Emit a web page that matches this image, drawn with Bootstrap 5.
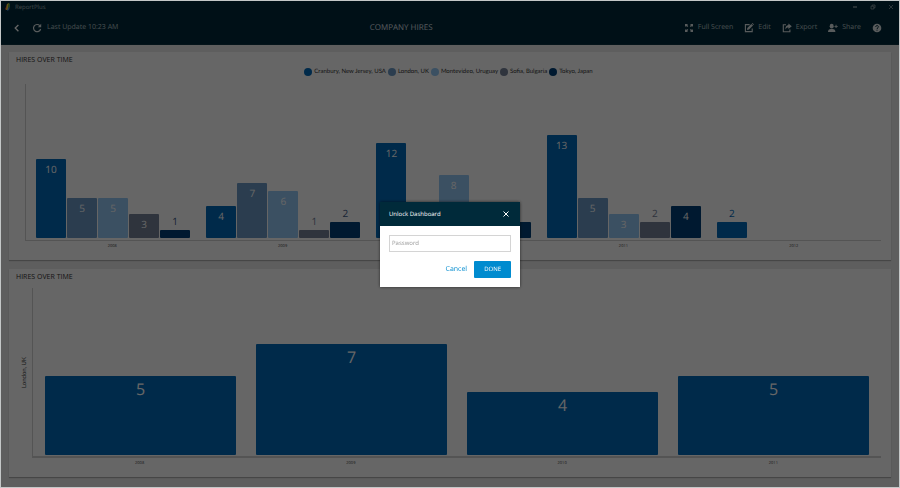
<!DOCTYPE html>
<html lang="en">
<head>
<meta charset="utf-8">
<meta name="viewport" content="width=device-width, initial-scale=1">
<title>ReportPlus - Company Hires</title>
<link href="https://cdn.jsdelivr.net/npm/bootstrap@5.3.0/dist/css/bootstrap.min.css" rel="stylesheet">
<style>
  body { font-family: "Open Sans", "Noto Sans", sans-serif; font-size: 7px; line-height: 12px; background: #c8c8c8; text-rendering: geometricPrecision; }
  button, input { text-rendering: inherit; }
  button { background: none; border: 0; padding: 0; color: inherit; }
  .app-window { background: #ebebeb; }
  .app-frame { z-index: 1060; inset: 0; border: 1px solid #c4c7c7; pointer-events: none; }
  .legend-list, .axis-name { font-family: Lato, "Open Sans", sans-serif; }
  .app-top { background: #002a3a; color: #fff; border-bottom: 1px solid #0d3442; }
  .title-bar { height: 12px; padding: 2px 6px 0 5px; font-size: 6px; line-height: 8px; color: #a4b2b8; }
  .window-controls { gap: 12px; }
  .window-controls svg { width: 6px; height: 6px; }
  .tool-bar { height: 32px; padding: 0 18px 0 13px; }
  .tool-bar svg { width: 10px; height: 10px; flex: none; }
  .tool-bar .muted-text { color: #b4c0c5; }
  .update-status { gap: 5px; }
  .page-title { font-size: 8px; line-height: 12px; color: #d6dee1; }
  .tool-list { gap: 11px; }
  .tool-button { display: flex; align-items: center; gap: 4px; }
  .tool-button svg { color: #dde3e5; }
  .dashboard { padding: 7px 9px 11px; gap: 9px; min-height: 0; }
  .widget { background: #fff; box-shadow: 0 1px 1px rgba(0, 0, 0, .25); flex: 1 1 0; min-height: 0; padding: 3px 10px 9px 7px; }
  .widget-title { font-size: 7px; line-height: 12px; margin: 0; color: #333; font-weight: 400; }
  .legend-list { font-size: 6px; line-height: 10px; gap: 2px; color: #333; margin: 0 0 7px; }
  .legend-list li { display: flex; align-items: center; gap: 2px; }
  .legend-list i { width: 8px; height: 8px; border-radius: 50%; background: var(--tone); }
  .plot { border-left: 1px solid #d2d2d2; border-bottom: 1px solid #d2d2d2; min-height: 0; }
  .plot-by-city { margin-left: 9px; padding: 0 2px 2px; --unit: 5.14%; }
  .plot-london { border-bottom-width: 2px; padding: 0 2px 1px; --unit: 9.5%; }
  .bar-group { flex: 1 1 0; display: flex; align-items: flex-end; gap: 1px; padding: 0 8px; }
  .plot-london .bar-group { padding: 0 10px; }
  .bar { flex: 1 1 0; height: calc(var(--value) * var(--unit)); background: var(--tone); border-radius: 1px; color: #fff; text-align: center; font-size: 10px; line-height: 12px; padding-top: 4px; }
  .bar.label-above { color: var(--label, var(--tone)); padding: 0; }
  .bar.label-above span { display: block; margin-top: -15px; }
  .plot-london .bar { font-size: 16px; line-height: 18px; }
  .tone-1 { --tone: #0069b9; }
  .tone-2 { --tone: #6b9ac6; }
  .tone-3 { --tone: #94c8f5; }
  .tone-4 { --tone: #75829a; }
  .tone-5 { --tone: #004078; --label: #3d5a85; }
  .axis-labels { display: flex; font-size: 4px; line-height: 8px; color: #444; text-align: center; padding: 2px 2px 0; }
  .axis-labels span { flex: 1 1 0; }
  .axis-by-city { margin-left: 9px; }
  .axis-name { writing-mode: vertical-rl; transform: rotate(180deg); font-size: 6px; line-height: 10px; color: #444; text-align: center; width: 10px; margin: 0 2px 12px 4px; }
  .modal-backdrop { --bs-backdrop-opacity: .6; }
  .unlock-modal { --bs-modal-width: 140px; --bs-modal-margin: 0px; }
  .unlock-modal .modal-dialog { max-width: 140px; margin: 0 auto; }
  .unlock-modal .modal-content { border: 0; border-radius: 0; box-shadow: 0 0 3px rgba(0, 0, 0, .6); }
  .unlock-modal .modal-header { background: #002a3a; color: #fff; border: 0; border-radius: 0; padding: 6px 11px 6px 9px; }
  .unlock-modal .modal-title { font-size: 6px; line-height: 12px; font-weight: 400; }
  .unlock-modal .modal-header svg { width: 6px; height: 6px; display: block; }
  .unlock-modal .modal-body { padding: 9px; }
  .unlock-modal .form-control { font-size: 6px; line-height: 13px; padding: 1px 2px; min-height: 0; border: 1px solid #d4d4d4; border-radius: 0; }
  .unlock-modal .form-control::placeholder { color: #999; }
  .unlock-modal .modal-actions { gap: 7px; padding-top: 9px; }
  .unlock-modal .btn { font-size: 7px; line-height: 11px; padding: 3px 0; border: 0; border-radius: 1px; color: #0a8fd0; }
  .unlock-modal .btn-done { background: #008bcf; color: #fff; padding: 3px 10px; font-size: 6px; }
</style>
<script src="https://cdn.jsdelivr.net/npm/bootstrap@5.3.0/dist/js/bootstrap.bundle.min.js"></script>
</head>
<body>
<div class="app-window vh-100 d-flex flex-column overflow-hidden">
  <header class="app-top">
    <div class="title-bar d-flex justify-content-between align-items-center">
      <div class="d-flex align-items-center gap-1">
        <svg width="6" height="8" viewBox="0 0 6 8" aria-hidden="true"><path d="M2 1 1 4 0 6l1 1 1-1z" fill="#e6453c"/><path d="M2 1 4 0 3 7 1 7z" fill="#f6d432"/><path d="M4 0 5 1 5 4 3 5z" fill="#4fa84f"/><path d="M3 5 5 4 4 7 2 8z" fill="#3f83d5"/></svg>
        <span>ReportPlus</span>
      </div>
      <div class="window-controls d-flex align-items-center">
        <button type="button" aria-label="Minimize" class="d-flex"><svg viewBox="0 0 6 6"><path d="M1 3h4" stroke="currentColor" stroke-width="1.2"/></svg></button>
        <button type="button" aria-label="Restore" class="d-flex"><svg viewBox="0 0 6 6" fill="none" stroke="currentColor" stroke-width=".7"><path d="M1 2.2h2.8V5H1zM2.2 2.2V1H5v2.8H3.8"/></svg></button>
        <button type="button" aria-label="Close window" class="d-flex"><svg viewBox="0 0 6 6"><path d="m1 1 4 4M5 1 1 5" stroke="currentColor" stroke-width=".7"/></svg></button>
      </div>
    </div>
    <nav class="tool-bar d-flex justify-content-between align-items-center">
      <div class="update-status d-flex align-items-center">
        <button type="button" aria-label="Back" class="d-flex me-1"><svg viewBox="0 0 10 10" fill="none" stroke="#fff" stroke-width="1.3"><path d="M5.4 2 2.2 5l3.2 3.2"/></svg></button>
        <button type="button" aria-label="Refresh" class="d-flex"><svg viewBox="0 0 10 10"><path d="M7.8 2.7A3.6 3.6 0 1 0 8.6 6" fill="none" stroke="#dde3e5" stroke-width="1.2"/><path d="M9.2.8v3.4H5.8z" fill="#dde3e5"/></svg></button>
        <span class="muted-text">Last Update 10:23 AM</span>
      </div>
      <h1 class="page-title mb-0 fw-normal">COMPANY HIRES</h1>
      <div class="tool-list d-flex align-items-center muted-text">
        <button type="button" class="tool-button"><svg viewBox="0 0 10 10" fill="currentColor"><path d="M1 1h3L3.1 1.9 4.3 3.1 3.3 4.1 2 2.9 1 4zM9 1v3L8.1 3 6.8 4.1 5.8 3.1 7 1.9 6 1zM1 9V6l1 1 1.3-1.1 1 1L3.1 8.1 4 9zM9 9H6l1-.9-1.2-1.2 1-1L8.1 7 9 6z"/></svg>Full Screen</button>
        <button type="button" class="tool-button"><svg viewBox="0 0 10 10"><path d="M5.6 1.6H1.4v7h6.8V5.5" fill="none" stroke="currentColor" stroke-width="1.1"/><path d="m3.3 5 4-4L9 2.5l-4 4-2 .5zM7.8.5l.7-.5L10 1.500 9.400 2z" fill="currentColor"/></svg>Edit</button>
        <button type="button" class="tool-button"><svg viewBox="0 0 10 10"><path d="M4 1.700H1.300v7h6.600V6.400" fill="none" stroke="currentColor" stroke-width="1.100"/><path d="M6.400.5 9.800 3.300 6.400 6.100V4.400C5 4.400 4 5 3.300 6.500 3.400 3.800 4.500 2.300 6.400 2.100z" fill="currentColor"/></svg>Export</button>
        <button type="button" class="tool-button"><svg viewBox="0 0 10 10" fill="currentColor"><ellipse cx="3.700" cy="3.200" rx="2" ry="2.400"/><path d="M0 8.900C0 6.800 1 6.300 2.800 5.900h1.800c1.800.4 2.800.9 2.800 3z"/><path d="M7.600 1.700h.9v1.200h1.300v.9H8.500V5h-.9V3.800H6.400v-.9h1.200z"/></svg>Share</button>
        <button type="button" class="tool-button" aria-label="Help"><svg viewBox="0 0 10 10"><circle cx="5" cy="5" r="4.300" fill="currentColor"/><path d="M3.700 4c0-1.900 2.700-1.900 2.700-.2C6.400 4.900 5 4.800 5 6M5 6.700v1" fill="none" stroke="#002a3a" stroke-width="1"/></svg></button>
      </div>
    </nav>
  </header>

  <main class="dashboard d-flex flex-column flex-grow-1">
    <section class="widget d-flex flex-column">
      <h2 class="widget-title">HIRES OVER TIME</h2>
      <ul class="legend-list list-unstyled d-flex justify-content-center">
        <li class="tone-1"><i></i>Cranbury, New Jersey, USA</li>
        <li class="tone-2"><i></i>London, UK</li>
        <li class="tone-3"><i></i>Montevideo, Uruguay</li>
        <li class="tone-4"><i></i>Sofia, Bulgaria</li>
        <li class="tone-5"><i></i>Tokyo, Japan</li>
      </ul>
      <div class="plot plot-by-city d-flex flex-grow-1">
        <div class="bar-group">
          <div class="bar tone-1" style="--value:10">10</div>
          <div class="bar tone-2" style="--value:5">5</div>
          <div class="bar tone-3" style="--value:5">5</div>
          <div class="bar tone-4" style="--value:3">3</div>
          <div class="bar tone-5 label-above" style="--value:1"><span>1</span></div>
        </div>
        <div class="bar-group">
          <div class="bar tone-1" style="--value:4">4</div>
          <div class="bar tone-2" style="--value:7">7</div>
          <div class="bar tone-3" style="--value:6">6</div>
          <div class="bar tone-4 label-above" style="--value:1"><span>1</span></div>
          <div class="bar tone-5 label-above" style="--value:2"><span>2</span></div>
        </div>
        <div class="bar-group">
          <div class="bar tone-1" style="--value:12">12</div>
          <div class="bar tone-2" style="--value:4"></div>
          <div class="bar tone-3" style="--value:8">8</div>
          <div class="bar p-0" style="--value:0"></div>
          <div class="bar tone-5" style="--value:2"></div>
        </div>
        <div class="bar-group">
          <div class="bar tone-1" style="--value:13">13</div>
          <div class="bar tone-2" style="--value:5">5</div>
          <div class="bar tone-3" style="--value:3">3</div>
          <div class="bar tone-4 label-above" style="--value:2"><span>2</span></div>
          <div class="bar tone-5" style="--value:4">4</div>
        </div>
        <div class="bar-group">
          <div class="bar tone-1 label-above" style="--value:2"><span>2</span></div>
          <div class="bar p-0" style="--value:0"></div>
          <div class="bar p-0" style="--value:0"></div>
          <div class="bar p-0" style="--value:0"></div>
          <div class="bar p-0" style="--value:0"></div>
        </div>
      </div>
      <div class="axis-labels axis-by-city"><span>2008</span><span>2009</span><span>2010</span><span>2011</span><span>2012</span></div>
    </section>

    <section class="widget d-flex flex-column">
      <h2 class="widget-title mb-1">HIRES OVER TIME</h2>
      <div class="d-flex flex-grow-1">
        <div class="axis-name">London, UK</div>
        <div class="d-flex flex-column flex-grow-1">
          <div class="plot plot-london d-flex flex-grow-1">
            <div class="bar-group"><div class="bar tone-1" style="--value:5">5</div></div>
            <div class="bar-group"><div class="bar tone-1" style="--value:7">7</div></div>
            <div class="bar-group"><div class="bar tone-1" style="--value:4">4</div></div>
            <div class="bar-group"><div class="bar tone-1" style="--value:5">5</div></div>
          </div>
          <div class="axis-labels"><span>2008</span><span>2009</span><span>2010</span><span>2011</span></div>
        </div>
      </div>
    </section>
  </main>
</div>

<div class="modal-backdrop show"></div>
<div class="modal unlock-modal d-block" tabindex="-1" role="dialog" aria-modal="true" aria-labelledby="unlock-title">
  <div class="modal-dialog modal-dialog-centered min-vh-100">
    <form class="modal-content">
      <div class="modal-header d-flex justify-content-between align-items-center">
        <h2 class="modal-title" id="unlock-title">Unlock Dashboard</h2>
        <button type="button" aria-label="Close"><svg viewBox="0 0 6 6"><path d="m.5.5 5 5M5.500.5l-5 5" stroke="#fff" stroke-width="1"/></svg></button>
      </div>
      <div class="modal-body">
        <input type="password" id="password" class="form-control" placeholder="Password" aria-label="Password">
        <div class="modal-actions d-flex justify-content-end">
          <button type="button" class="btn">Cancel</button>
          <button type="submit" class="btn btn-done">DONE</button>
        </div>
      </div>
    </form>
  </div>
</div>
<div class="app-frame position-fixed"></div>
</body>
</html>
